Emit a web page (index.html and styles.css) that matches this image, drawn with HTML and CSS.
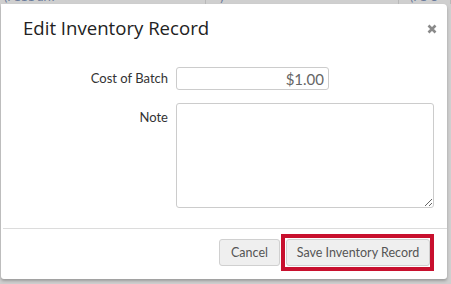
FILE: index.html
```html
<!DOCTYPE html>
<html>
<head>
<meta charset="utf-8">
<link rel="stylesheet" href="styles.css">
</head>
<body>
<div class="backrow">
  <div class="cell c1"><span>(I 111 ark</span></div>
  <div class="cell c2"><span>y</span></div>
  <div class="cell c3"><span>(I 1 U</span></div>
</div>
<div class="modal">
  <div class="modal-header">
    <h3 class="modal-title">Edit Inventory Record</h3>
    <button class="close" aria-label="Close">
      <svg width="10" height="10" viewBox="0 0 10 10"><path d="M1.5 1.5 L8.5 8.5 M8.5 1.5 L1.5 8.5" stroke="#8a8a8a" stroke-width="2.6" stroke-linecap="butt"/></svg>
    </button>
  </div>
  <div class="modal-body">
    <div class="form-row">
      <label class="label">Cost of Batch</label>
      <input class="input" type="text" value="$1.00">
    </div>
    <div class="form-row">
      <label class="label note-label">Note</label>
      <textarea class="textarea"></textarea>
    </div>
  </div>
  <div class="modal-footer">
    <button class="btn btn-cancel">Cancel</button>
    <span class="highlight"><button class="btn btn-save">Save Inventory Record</button></span>
  </div>
</div>
</body>
</html>
```

FILE: styles.css
```css
html, body {
  margin: 0;
  padding: 0;
}
body {
  background: #cfcfcf;
  font-family: Lato, "Open Sans", sans-serif;
  width: 451px;
  height: 284px;
  overflow: hidden;
}
.backrow {
  height: 4px;
  overflow: hidden;
  display: flex;
  padding-left: 1px;
}
.backrow .cell {
  height: 4px;
  overflow: hidden;
  font-size: 12px;
  color: #6a7a9a;
  border-right: 1px solid #b8b8b8;
}
.backrow .cell span {
  display: block;
  margin-top: -9px;
  line-height: 12px;
  padding-left: 3px;
}
.c1 { width: 204px; }
.c2 { width: 182px; padding-left: 10px; }
.c3 { flex: 1; border-right: none; padding-left: 8px; }

.modal {
  margin: 0 4px 0 1px;
  height: 275px;
  background: #fff;
  border-radius: 0 4px 3px 3px;
  box-shadow: 0 2px 3px rgba(0,0,0,0.25);
  display: flex;
  flex-direction: column;
  box-sizing: border-box;
}
.modal-header {
  display: flex;
  align-items: center;
  justify-content: space-between;
  padding: 11px 10px 9px 22px;
}
.modal-title {
  margin: 0;
  font-family: "Open Sans", Lato, sans-serif;
  font-size: 18.6px;
  font-weight: 400;
  line-height: 25px;
  color: #222;
}
.close {
  border: 0;
  background: none;
  padding: 0;
  width: 10px;
  height: 10px;
  margin-top: 2px;
  display: flex;
}
.modal-body {
  padding: 18px 13px 20px 0;
  display: flex;
  flex-direction: column;
  gap: 13px;
}
.form-row {
  display: grid;
  grid-template-columns: 167px 1fr;
  column-gap: 8px;
  align-items: start;
}
.label {
  text-align: right;
  font-size: 13px;
  color: #333;
  line-height: 23px;
}
.note-label {
  line-height: 28px;
}
.input {
  width: 153px;
  height: 23px;
  box-sizing: border-box;
  border: 1px solid #ccc;
  border-radius: 3px;
  text-align: right;
  font-family: Lato, sans-serif;
  font-size: 15px;
  color: #666;
  padding: 0 4px 0 6px;
  outline: none;
  margin: 0;
}
.textarea {
  width: 258px;
  height: 105px;
  box-sizing: border-box;
  border: 1px solid #ccc;
  border-radius: 3px;
  margin: 0;
  display: block;
  resize: both;
  font-family: Lato, sans-serif;
}
.modal-footer {
  margin: 0 0 0 2px;
  border-top: 1px solid #dcdcdc;
  padding: 5px 13px 7px 0;
  display: flex;
  justify-content: flex-end;
  align-items: center;
  gap: 1px;
}
.btn {
  height: 27px;
  box-sizing: border-box;
  border: 1px solid #d0d0d0;
  border-radius: 3px;
  background: #efefef;
  color: #555;
  font-family: Lato, sans-serif;
  font-size: 12.5px;
  padding: 0 12px;
  margin: 0;
  display: block;
}
.btn-cancel {
  width: 61px;
  padding: 0;
}
.highlight {
  display: block;
  border: 4px solid #c8102e;
  padding: 1px 0 1px 1px;
}
.btn-save {
  width: 144px;
  padding: 0;
}
```
